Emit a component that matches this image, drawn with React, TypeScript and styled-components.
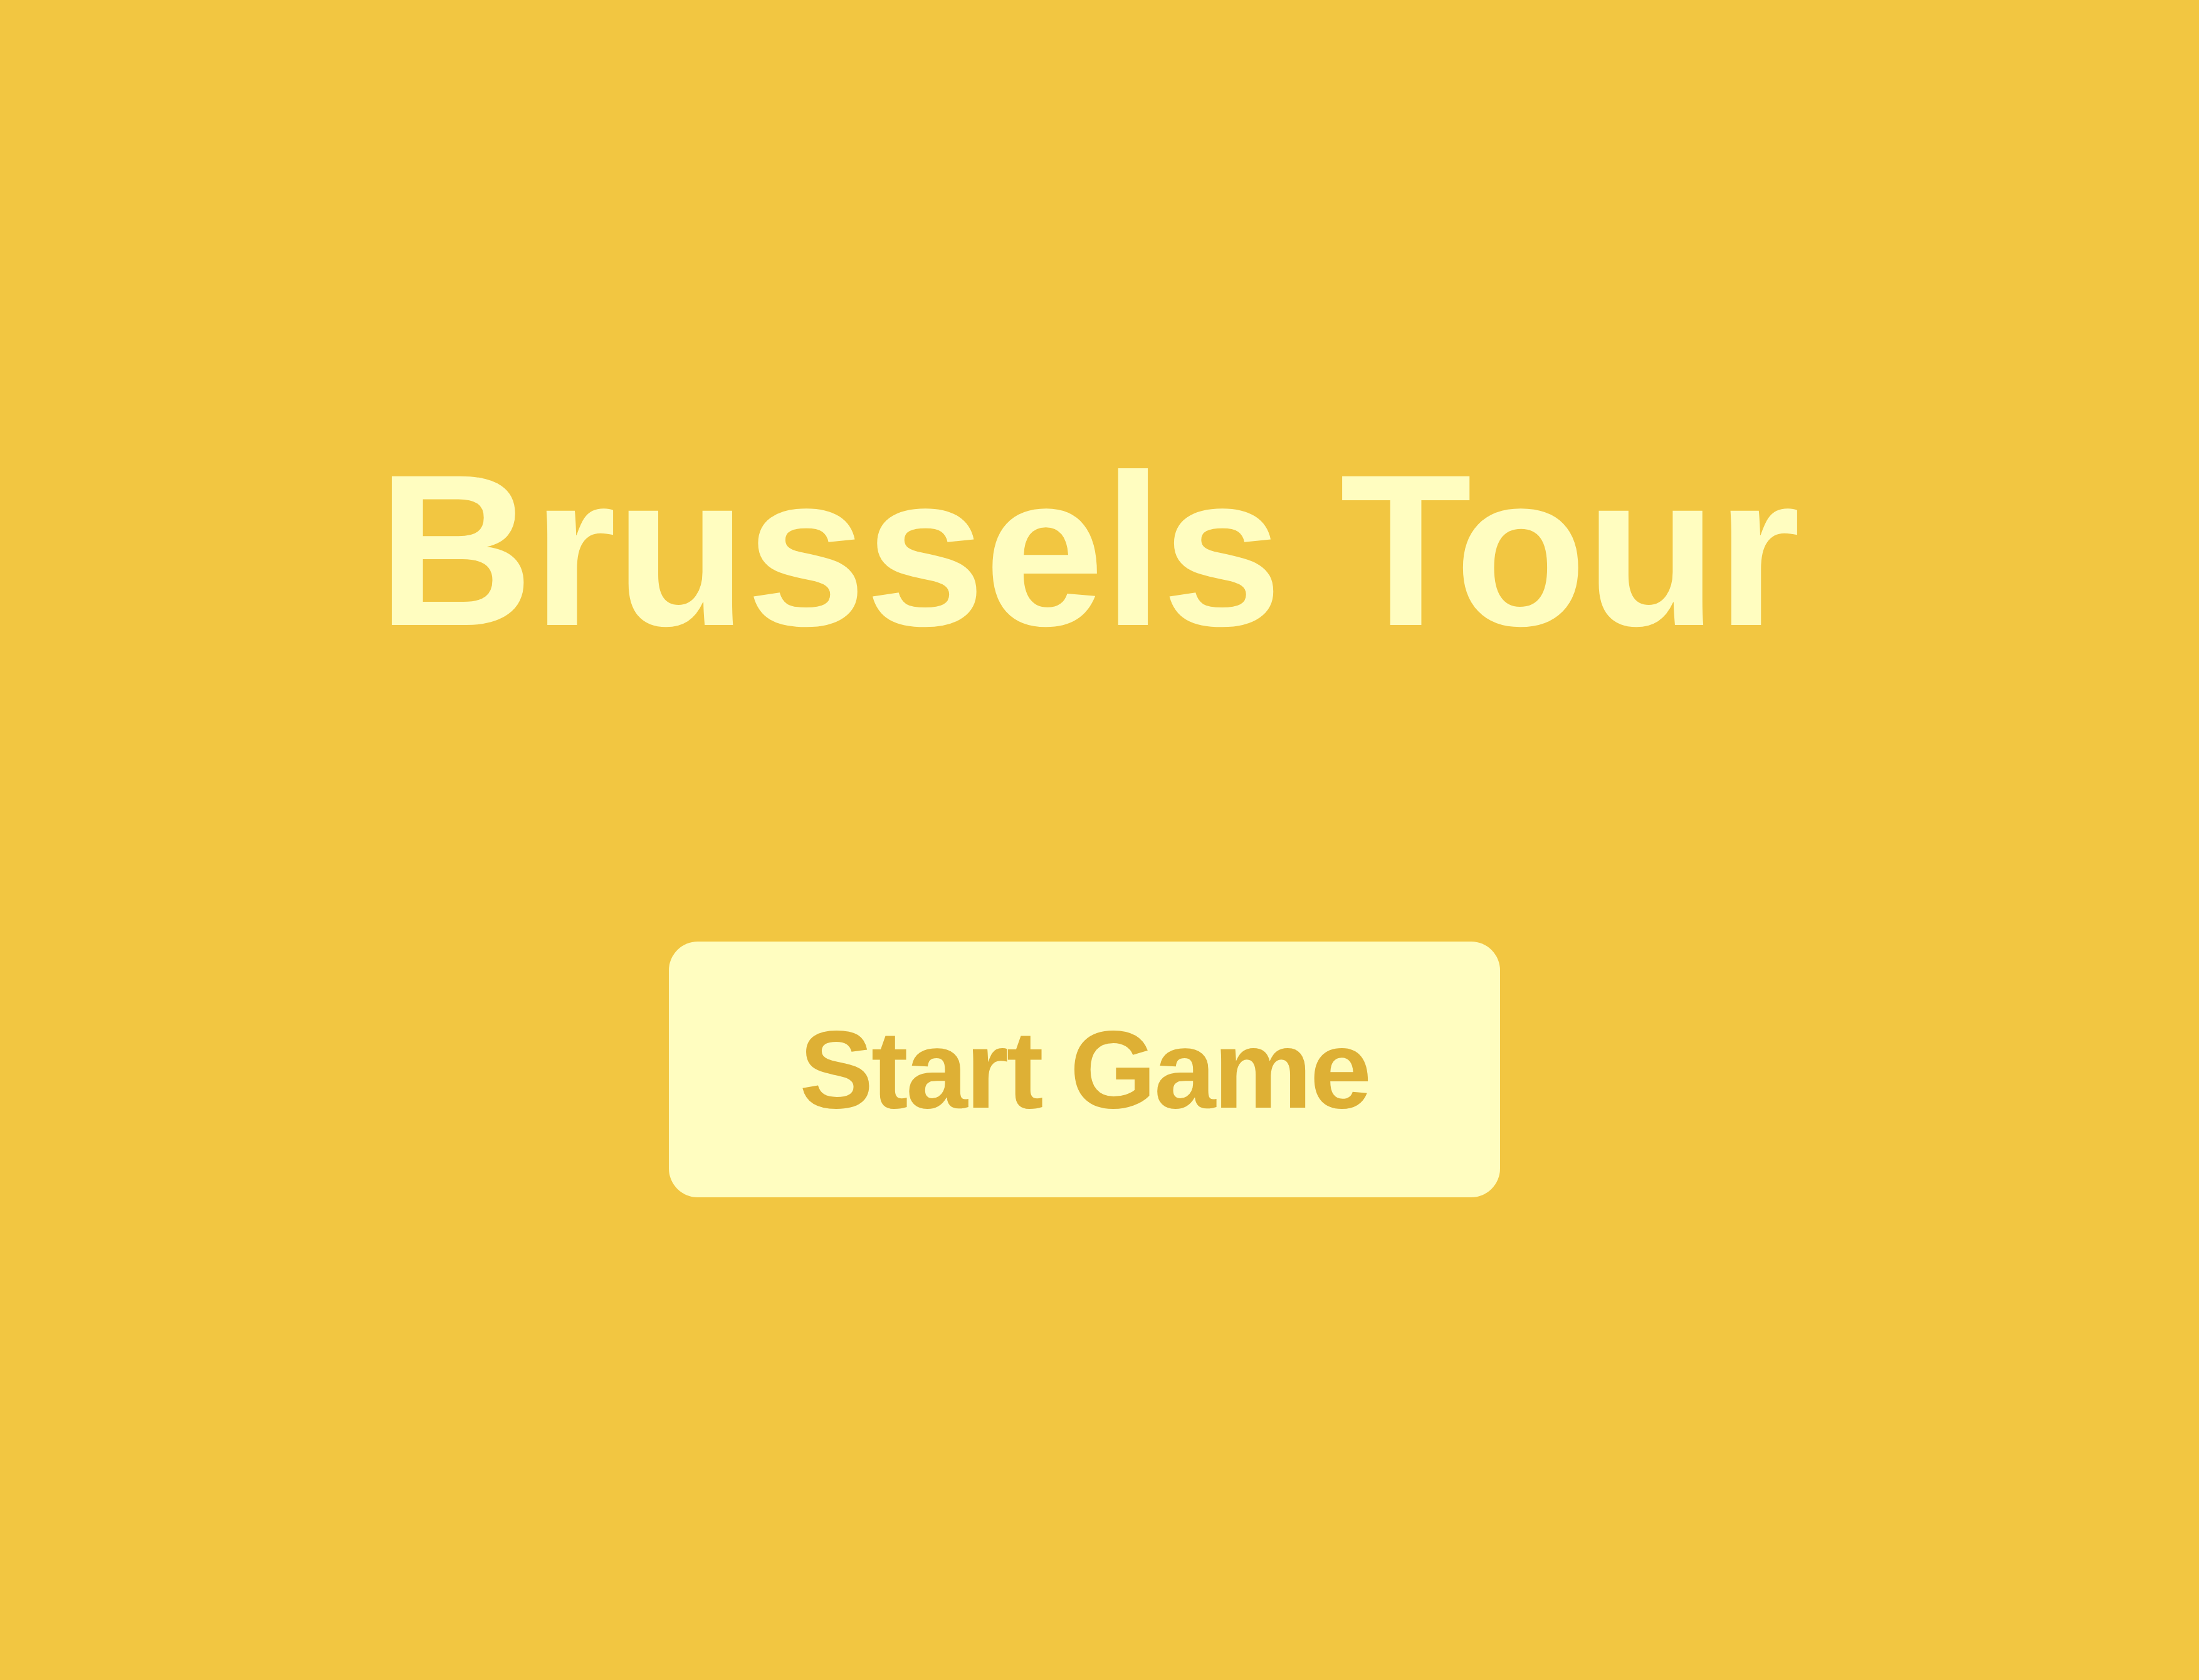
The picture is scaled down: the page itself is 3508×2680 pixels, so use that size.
import React from "react";
import styled, { createGlobalStyle } from "styled-components";

const GlobalStyle = createGlobalStyle`
  html, body {
    margin: 0;
    padding: 0;
    background: #f2c641;
  }
  body {
    font-family: "Liberation Sans", Arial, sans-serif;
  }
`;

const Screen = styled.main`
  width: 3508px;
  height: 2680px;
  box-sizing: border-box;
  padding-top: 705px;
  display: flex;
  flex-direction: column;
  align-items: center;
  background: #f2c641;
`;

const Title = styled.h1`
  margin: 0 36px 0 0;
  font-family: "Liberation Sans", Arial, sans-serif;
  font-weight: 700;
  font-size: 345px;
  letter-spacing: -2px;
  line-height: 1;
  color: #fffdc0;
  white-space: nowrap;
`;

const StartButton = styled.button`
  margin-top: 452px;
  margin-right: 48px;
  width: 1326px;
  height: 408px;
  border: none;
  border-radius: 46px;
  background: #fffdc0;
  color: #deb035;
  font-family: "Liberation Sans", Arial, sans-serif;
  font-weight: 700;
  font-size: 177px;
  letter-spacing: -3.5px;
  line-height: 1;
  display: flex;
  align-items: center;
  justify-content: center;
  padding: 0;
  cursor: pointer;
`;

export default function App() {
  return (
    <>
      <GlobalStyle />
      <Screen>
        <Title>Brussels Tour</Title>
        <StartButton>Start Game</StartButton>
      </Screen>
    </>
  );
}
